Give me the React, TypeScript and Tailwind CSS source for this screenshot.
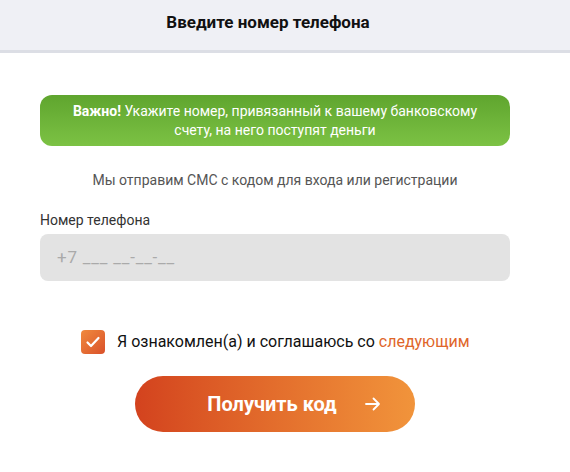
import React from 'react';

const App: React.FC = () => {
  return (
    <div className="w-[570px] h-[472px] bg-white font-['Roboto',sans-serif] text-[#222]">
      <div className="h-[53px] bg-[#eff0f5] border-b-[3px] border-[#dcdee5] flex items-center justify-center pr-[34px] pb-[6px]">
        <h1 className="text-[17px] font-bold text-[#111] leading-none">Введите номер телефона</h1>
      </div>

      <div className="w-[470px] ml-10 pt-[42px]">
        <div className="h-[51px] rounded-[12px] bg-gradient-to-b from-[#5fa52e] to-[#7cc244] flex flex-col items-center justify-center text-white text-[14px] leading-[19px] text-center">
          <p>
            <span className="font-bold">Важно!</span> Укажите номер, привязанный к вашему банковскому
          </p>
          <p>счету, на него поступят деньги</p>
        </div>

        <p className="mt-[25px] text-center text-[14px] text-[#555] leading-[18px]">
          Мы отправим СМС с кодом для входа или регистрации
        </p>

        <label className="block mt-[22px] text-[14px] text-[#333] leading-[18px]">Номер телефона</label>
        <div className="mt-[5px] h-[47px] rounded-[8px] bg-[#e3e3e3] flex items-center px-[17px]">
          <span className="text-[17px] text-[#aaa] tracking-[0.8px]">+7 ___ __-__-__</span>
        </div>

        <div className="mt-[49px] flex items-center pl-[41px] gap-3">
          <div className="w-6 h-6 rounded-[4px] bg-gradient-to-br from-[#f08a3e] to-[#d9502a] flex items-center justify-center">
            <svg width="16" height="16" viewBox="0 0 16 16" fill="none">
              <path d="M2.5 8.5l3.5 3.5 7.5-8" stroke="white" strokeWidth="2.2" strokeLinecap="round" strokeLinejoin="round" />
            </svg>
          </div>
          <p className="text-[16px] text-[#111]">
            Я ознакомлен(а) и соглашаюсь со <span className="text-[#e0662a]">следующим</span>
          </p>
        </div>

        <div className="mt-[22px] flex justify-center">
          <button className="w-[280px] h-[56px] rounded-full bg-gradient-to-r from-[#d3421e] to-[#f1943b] text-white flex items-center justify-center gap-[27px] pl-[39px]">
            <span className="text-[20px] font-bold">Получить код</span>
            <svg width="18" height="18" viewBox="0 0 18 18" fill="none">
              <path d="M2 9h13M9.5 3.5L15 9l-5.5 5.5" stroke="white" strokeWidth="1.8" strokeLinecap="round" strokeLinejoin="round" />
            </svg>
          </button>
        </div>
      </div>
    </div>
  );
};

export default App;
